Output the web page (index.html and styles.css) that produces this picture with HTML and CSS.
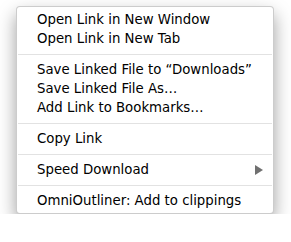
FILE: index.html
```html
<!DOCTYPE html>
<html lang="en">
<head>
    <meta charset="UTF-8">
    <title>Link context menu</title>
    <link rel="stylesheet" href="styles.css">
</head>
<body>

    <div class="menu">
        <div class="item">Open Link in New Window</div>
        <div class="item">Open Link in New Tab</div>
        <div class="sep"></div>
        <div class="item">Save Linked File to “Downloads”</div>
        <div class="item">Save Linked File As…</div>
        <div class="item">Add Link to Bookmarks…</div>
        <div class="sep"></div>
        <div class="item">Copy Link</div>
        <div class="sep"></div>
        <div class="item has-sub">Speed Download <span class="arrow"></span></div>
        <div class="sep"></div>
        <div class="item">OmniOutliner: Add to clippings</div>
    </div>

</body>
</html>
```

FILE: styles.css
```css
body {
    background-color: white;
    margin: 0;
    padding: 6px 0 0 16px;
    font-family: "DejaVu Sans", "Liberation Sans", sans-serif;
}

.menu {
    width: 256px;
    padding: 3px 0;
    background-color: #fff;
    border: 1px solid rgba(0, 0, 0, 0.2);
    border-radius: 4px;
    box-shadow: 0 8px 18px rgba(0, 0, 0, 0.38);
}

.item {
    height: 19px;
    line-height: 19px;
    padding-left: 20px;
    font-size: 13.3px;
    color: #000;
    white-space: nowrap;
}

.has-sub {
    display: flex;
    justify-content: space-between;
    align-items: center;
    padding-right: 10px;
}

/* サブメニューの三角 */
.arrow {
    width: 0;
    height: 0;
    border-top: 5px solid transparent;
    border-bottom: 5px solid transparent;
    border-left: 8px solid #707070;
}

.sep {
    height: 1px;
    margin: 6px 1px 5px 1px;
    background-color: #e2e2e2;
}
```
